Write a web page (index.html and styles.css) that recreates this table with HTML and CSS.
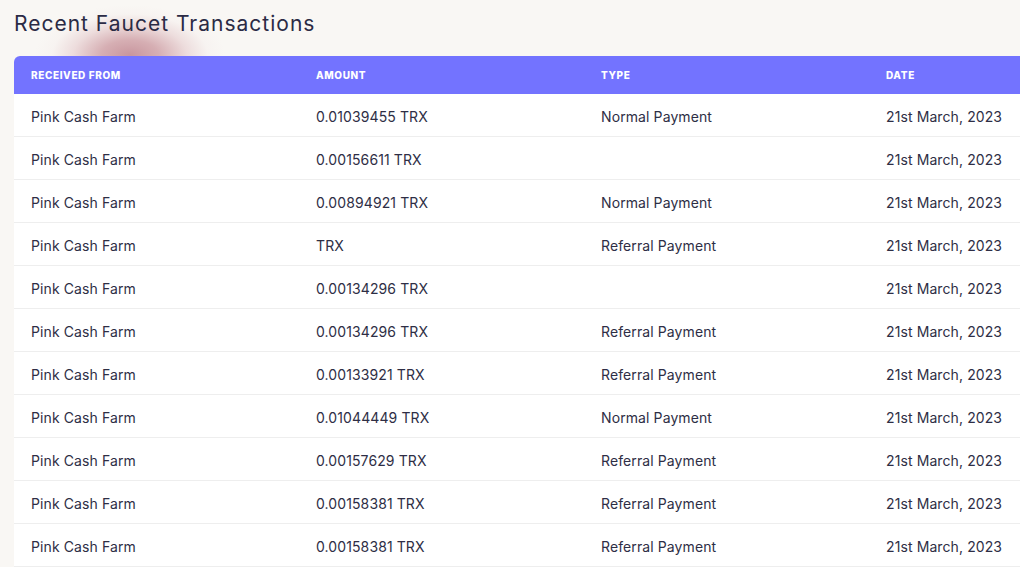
FILE: index.html
```html
<!DOCTYPE html>
<html>
<head>
<meta charset="utf-8">
<link rel="stylesheet" href="styles.css">
</head>
<body>
<div class="page">
  <div class="blob"></div>
  <h1 class="title">Recent Faucet Transactions</h1>
  <div class="table">
    <div class="row head">
      <div class="cell">Received From</div>
      <div class="cell">Amount</div>
      <div class="cell">Type</div>
      <div class="cell">Date</div>
    </div>
    <div class="row"><div class="cell">Pink Cash Farm</div><div class="cell">0.01039455 TRX</div><div class="cell">Normal Payment</div><div class="cell">21st March, 2023</div></div>
    <div class="row"><div class="cell">Pink Cash Farm</div><div class="cell">0.00156611 TRX</div><div class="cell"></div><div class="cell">21st March, 2023</div></div>
    <div class="row"><div class="cell">Pink Cash Farm</div><div class="cell">0.00894921 TRX</div><div class="cell">Normal Payment</div><div class="cell">21st March, 2023</div></div>
    <div class="row"><div class="cell">Pink Cash Farm</div><div class="cell">TRX</div><div class="cell">Referral Payment</div><div class="cell">21st March, 2023</div></div>
    <div class="row"><div class="cell">Pink Cash Farm</div><div class="cell">0.00134296 TRX</div><div class="cell"></div><div class="cell">21st March, 2023</div></div>
    <div class="row"><div class="cell">Pink Cash Farm</div><div class="cell">0.00134296 TRX</div><div class="cell">Referral Payment</div><div class="cell">21st March, 2023</div></div>
    <div class="row"><div class="cell">Pink Cash Farm</div><div class="cell">0.00133921 TRX</div><div class="cell">Referral Payment</div><div class="cell">21st March, 2023</div></div>
    <div class="row"><div class="cell">Pink Cash Farm</div><div class="cell">0.01044449 TRX</div><div class="cell">Normal Payment</div><div class="cell">21st March, 2023</div></div>
    <div class="row"><div class="cell">Pink Cash Farm</div><div class="cell">0.00157629 TRX</div><div class="cell">Referral Payment</div><div class="cell">21st March, 2023</div></div>
    <div class="row"><div class="cell">Pink Cash Farm</div><div class="cell">0.00158381 TRX</div><div class="cell">Referral Payment</div><div class="cell">21st March, 2023</div></div>
    <div class="row"><div class="cell">Pink Cash Farm</div><div class="cell">0.00158381 TRX</div><div class="cell">Referral Payment</div><div class="cell">21st March, 2023</div></div>
  </div>
</div>
</body>
</html>
```

FILE: styles.css
```css
html, body {
  margin: 0;
  padding: 0;
  background: #f9f7f4;
  overflow: hidden;
  width: 1020px;
  height: 567px;
}
body {
  font-family: Inter, "Liberation Sans", sans-serif;
  color: #2e2e45;
}
.page {
  position: relative;
  padding: 0 0 0 14px;
}
.blob {
  position: absolute;
  left: 35px;
  top: 5px;
  width: 190px;
  height: 100px;
  background: radial-gradient(ellipse 50% 50% at 50% 50%, rgba(200,150,158,1) 0%, rgba(208,162,168,0.85) 30%, rgba(225,195,198,0.5) 60%, rgba(240,228,228,0.2) 82%, rgba(249,247,244,0) 100%);
  pointer-events: none;
}
.title {
  position: relative;
  margin: 0;
  height: 56px;
  padding-top: 11px;
  box-sizing: border-box;
  font-size: 21px;
  font-weight: 400;
  letter-spacing: 1px;
  line-height: 26px;
  color: #2b2b45;
}
.table {
  position: relative;
  width: 1140px;
  background: #fff;
  border-top-left-radius: 6px;
}
.row {
  display: grid;
  grid-template-columns: 285px 285px 285px 285px;
  height: 43px;
  align-items: center;
  border-bottom: 1px solid #eeeeee;
  box-sizing: border-box;
  font-size: 14px;
  letter-spacing: 0.1px;
}
.row .cell {
  padding-left: 17px;
  padding-top: 3px;
}
.row.head {
  height: 38px;
  background: #7373ff;
  color: #fff;
  font-size: 10px;
  font-weight: 800;
  text-transform: uppercase;
  letter-spacing: 0.6px;
  border-bottom: none;
  border-top-left-radius: 6px;
}
.row.head .cell {
  padding-top: 0;
}
```
